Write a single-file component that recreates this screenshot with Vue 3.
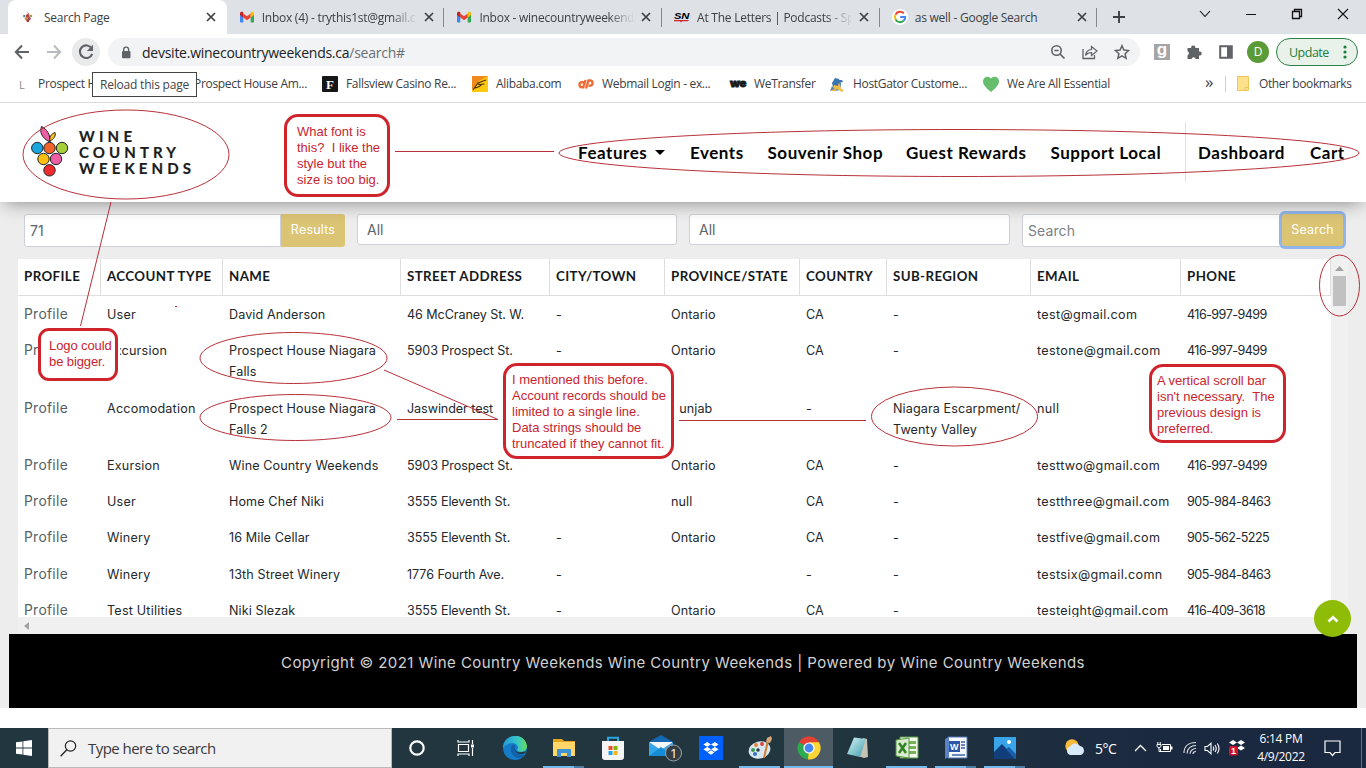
<script setup>
const tabs = [
  { icon: 'grape', title: 'Search Page', active: true },
  { icon: 'gmail', title: 'Inbox (4) - trythis1st@gmail.c' },
  { icon: 'gmail', title: 'Inbox - winecountryweekend' },
  { icon: 'sn', title: 'At The Letters | Podcasts - Sp' },
  { icon: 'google', title: 'as well - Google Search' },
]
const bookmarks = [
  { icon: 'l', text: 'Prospect H', w: 156 },
  { icon: 'none', text: 'Prospect House Am...', w: 152 },
  { icon: 'f', text: 'Fallsview Casino Re...', w: 150 },
  { icon: 'ali', text: 'Alibaba.com', w: 106 },
  { icon: 'cp', text: 'Webmail Login - ex...', w: 152 },
  { icon: 'we', text: 'WeTransfer', w: 99 },
  { icon: 'hg', text: 'HostGator Custome...', w: 154 },
  { icon: 'heart', text: 'We Are All Essential', w: 200 },
]
const nav = [
  { t: 'Features', w: 112, caret: true },
  { t: 'Events', w: 77.5 },
  { t: 'Souvenir Shop', w: 138.5 },
  { t: 'Guest Rewards', w: 144.5 },
  { t: 'Support Local', w: 134.5 },
]
const heads = ['PROFILE', 'ACCOUNT TYPE', 'NAME', 'STREET ADDRESS', 'CITY/TOWN', 'PROVINCE/STATE', 'COUNTRY', 'SUB-REGION', 'EMAIL', 'PHONE']
const rows = [
  ['User', 'David Anderson', '46 McCraney St. W.', '-', 'Ontario', 'CA', '-', 'test@gmail.com', '416-997-9499'],
  ['Excursion', 'Prospect House Niagara Falls', '5903 Prospect St.', '-', 'Ontario', 'CA', '-', 'testone@gmail.com', '416-997-9499'],
  ['Accomodation', 'Prospect House Niagara Falls 2', 'Jaswinder test', '', 'Punjab', '-', 'Niagara Escarpment/ Twenty Valley', 'null', ''],
  ['Exursion', 'Wine Country Weekends', '5903 Prospect St.', '', 'Ontario', 'CA', '-', 'testtwo@gmail.com', '416-997-9499'],
  ['User', 'Home Chef Niki', '3555 Eleventh St.', '', 'null', 'CA', '-', 'testthree@gmail.com', '905-984-8463'],
  ['Winery', '16 Mile Cellar', '3555 Eleventh St.', '-', 'Ontario', 'CA', '-', 'testfive@gmail.com', '905-562-5225'],
  ['Winery', '13th Street Winery', '1776 Fourth Ave.', '-', '', '-', '-', 'testsix@gmail.comn', '905-984-8463'],
  ['Test Utilities', 'Niki Slezak', '3555 Eleventh St.', '-', 'Ontario', 'CA', '-', 'testeight@gmail.com', '416-409-3618'],
]
</script>

<template>
  <div class="screen">
    <div class="strip">
      <div v-for="(t, i) in tabs" :key="i" class="tab" :class="{ active: t.active }">
        <svg v-if="t.icon === 'grape'" class="ic shift" viewBox="0 0 16 16"><path d="M7.500 2.500 9 5 8 6z" fill="#9c5a3c"/><circle cx="4.300" cy="7" r="1.300" fill="#5a8fa8"/><circle cx="7.800" cy="7" r="1.900" fill="#b5483a"/><circle cx="11" cy="7" r="1.300" fill="#a3a24a"/><circle cx="6.200" cy="9.500" r="1.500" fill="#c98a35"/><circle cx="9.300" cy="9.500" r="1.500" fill="#a8476f"/><circle cx="7.800" cy="11.500" r="1.500" fill="#a83232"/></svg>
        <svg v-else-if="t.icon === 'gmail'" class="ic" viewBox="0 0 16 16"><path d="M1 4v8.500c0 .6.400 1 1 1h2.300V6.500z" fill="#4285f4"/><path d="M15 4v8.500c0 .6-.4 1-1 1h-2.300V6.500z" fill="#34a853"/><path d="M4.300 4.500 8 7.300l3.700-2.800v4L8 11.300 4.300 8.500z" fill="#ea4335"/><path d="M1 4.500C1 2.800 2.600 2.400 3.700 3.100l.6.500v5L1 6z" fill="#c5221f"/><path d="M15 4.500c0-1.700-1.600-2.100-2.700-1.400l-.6.500v5L15 6z" fill="#fbbc04"/></svg>
        <svg v-else-if="t.icon === 'sn'" class="ic" viewBox="0 0 16 16"><text x="0" y="10" class="sn" textLength="15" lengthAdjust="spacingAndGlyphs">SN</text><path d="M0 11h15l-1 1.300H8l-1 1.300-1-1.300H0z" fill="#d5232f"/></svg>
        <svg v-else class="ic" viewBox="0 0 16 16"><circle cx="8" cy="8" r="8" fill="#fff"/><path d="M11.800 4.300A5.200 5.200 0 0 0 3.500 5.600" stroke="#ea4335" stroke-width="2" fill="none"/><path d="M3.500 5.600a5.200 5.200 0 0 0 0 4.900" stroke="#fbbc05" stroke-width="2" fill="none"/><path d="M3.500 10.500a5.200 5.200 0 0 0 8 1.300" stroke="#34a853" stroke-width="2" fill="none"/><path d="M11.500 11.800A5 5 0 0 0 13.200 8H8.200" stroke="#4285f4" stroke-width="2" fill="none"/></svg>
        <span class="tt" :class="{ fade: i > 0 && i < 4 }">{{ t.title }}</span>
        <svg class="x" viewBox="0 0 10 10"><path d="M1 1l8 8M9 1l-8 8" stroke="#3c4043" stroke-width="1.700"/></svg>
      </div>
      <svg class="plus" viewBox="0 0 12 12"><path d="M6 0v12M0 6h12" stroke="#3c4043" stroke-width="1.900"/></svg>
      <div class="winbtns">
        <svg viewBox="0 0 12 12"><path d="M1 3l5 5.500L11 3" fill="none" stroke="#111" stroke-width="1.100"/></svg>
        <svg viewBox="0 0 12 12"><path d="M1 6.500h10" stroke="#111"/></svg>
        <svg viewBox="0 0 12 12"><path d="M1.500 3.500h7v7h-7zM3.500 3.500v-2h7v7h-2" fill="none" stroke="#111" stroke-width="1.300"/></svg>
        <svg viewBox="0 0 12 12"><path d="M1 1l10 10M11 1L1 11" stroke="#111" stroke-width="1.100"/></svg>
      </div>
    </div>

    <div class="toolbar">
      <div class="tb"><svg width="16" height="16" viewBox="0 0 16 16"><path d="M15 8H2M8 1.500 1.800 8 8 14.500" fill="none" stroke="#5f6368" stroke-width="2"/></svg></div>
      <div class="tb"><svg width="16" height="16" viewBox="0 0 16 16"><path d="M1 8h13M8 1.500 14.200 8 8 14.500" fill="none" stroke="#b9bbbe" stroke-width="2"/></svg></div>
      <div class="tb rel"><svg width="16" height="16" viewBox="0 0 16 16"><path d="M13.700 4.500A6.300 6.300 0 1 0 14.200 9.800" fill="none" stroke="#5f6368" stroke-width="2.100"/><path d="M15 .8v6.200H8.800z" fill="#5f6368"/></svg></div>
      <div class="omni">
        <svg width="10" height="13" viewBox="0 0 10 13"><rect x="1" y="5" width="8.500" height="7.200" rx="1" fill="#5f6368"/><path d="M2.700 5.500V3.600a2.400 2.400 0 0 1 4.900 0v2" fill="none" stroke="#5f6368" stroke-width="1.400"/></svg>
        <span class="url">devsite.winecountryweekends.ca<i>/search#</i></span>
        <svg class="oi" viewBox="0 0 16 16"><circle cx="6.500" cy="6.500" r="4.700" fill="none" stroke="#5f6368" stroke-width="1.600"/><path d="M10 10l4.500 4.500M4.300 6.500h4.400" stroke="#5f6368" stroke-width="1.700"/></svg>
        <svg class="oi" viewBox="0 0 16 16"><path d="M1 5v9.500h11.500V11" fill="none" stroke="#5f6368" stroke-width="1.300"/><path d="M3.500 11.500C4 7.500 6.500 5.700 9.500 5.500V2.500L15 7l-5.500 4.500V8.500c-2.500 0-4.500.8-6 3z" fill="none" stroke="#5f6368" stroke-width="1.200"/></svg>
        <svg class="oi" viewBox="0 0 16 16"><path d="M8 1.700l1.900 4.300 4.700.5-3.500 3.200 1 4.600L8 11.900l-4.100 2.400 1-4.600L1.400 6.500 6.100 6z" fill="none" stroke="#5f6368" stroke-width="1.500"/></svg>
      </div>
      <div class="exts">
        <span class="g">g</span>
        <svg width="16" height="16" viewBox="0 0 16 16"><path d="M1.500 4h3.700a2.100 2.100 0 1 1 4.100 0H13v3.500a2.100 2.100 0 1 1 0 4V15H9.700a2.100 2.100 0 0 0-4.100 0H1.500v-3.700a2.100 2.100 0 0 0 0-4z" fill="#5f6368"/></svg>
        <svg width="16" height="16" viewBox="0 0 16 16"><path d="M2.200 2.200h11.600v11.600H2.200z" fill="none" stroke="#5f6368" stroke-width="2"/><path d="M9 2h5v12H9z" fill="#5f6368"/></svg>
      </div>
      <span class="ava">D</span>
      <span class="upd">Update<svg width="4" height="16" viewBox="0 0 4 16"><circle cx="2" cy="3" r="1.600"/><circle cx="2" cy="8" r="1.600"/><circle cx="2" cy="13" r="1.600"/></svg></span>
    </div>

    <div class="marks">
      <div v-for="b in bookmarks" :key="b.text" class="bm" :style="{ width: b.w + 'px' }">
        <svg v-if="b.icon !== 'none'" class="bi" viewBox="0 0 16 16">
          <text v-if="b.icon === 'l'" x="5" y="13" class="ltr">L</text>
          <g v-if="b.icon === 'f'"><rect width="16" height="16" rx="1" fill="#161616"/><text x="4" y="13" class="ff">F</text></g>
          <g v-if="b.icon === 'ali'"><path d="M0 0h16v16H0z" fill="#fdc90f"/><path d="M0 0h16L7 5 1 13H0z" fill="#f08a1c"/><path d="M1 14 6 7l8-3M6 8c2 1 5 .3 6.500 0M3 12c4-1 6-2 7-4" fill="none" stroke="#4b2f0c" stroke-width="1.100"/></g>
          <g v-if="b.icon === 'cp'" fill="none" stroke="#ef6c37" stroke-width="2.400"><path d="M6 6.300H4a2.500 2.500 0 0 0 0 5h1.300L7.500 4M8 12.500 10.500 4.500H12a2.600 2.600 0 0 1 0 5.200h-1.500"/></g>
          <text v-if="b.icon === 'we'" x="0" y="11" class="we" textLength="16" lengthAdjust="spacingAndGlyphs">we</text>
          <g v-if="b.icon === 'hg'"><path d="M3 7 6 2l4 1 2 5-1 6-6 1z" fill="#3b75af"/><path d="M2 15l3-6 4 1 1-4 2 7 3 1-2 2-5-3-2 2z" fill="#f3bd3f"/><path d="M1 15l2-5 3 3z" fill="#6689a5"/><path d="M8 4h5l1 2-5 1z" fill="#3b75af"/></g>
          <path v-if="b.icon === 'heart'" d="M8 16C4 12.500 0 9.500 0 5.300 0 .5 5.500-.8 8 2.500 10.500-.8 16 .5 16 5.300 16 9.500 12 12.500 8 16z" fill="#66bd6b"/>
        </svg>
        <span v-else class="bi"></span>
        <span class="bt">{{ b.text }}</span>
      </div>
      <span class="more">»</span><span class="msep"></span>
      <svg width="12" height="15" viewBox="0 0 12 15"><path d="M.5.500h11v14H.5z" fill="#fde28b" stroke="#efc65a"/><path d="M8 14.500v-3h3.500" fill="none" stroke="#efc65a"/></svg>
      <span class="other">Other bookmarks</span>
    </div>

    <header class="site">
      <svg class="logo" viewBox="0 0 164 56">
        <g stroke="#222" stroke-width="1">
          <path d="M20 18C11.500 14 9.500 8 11.500 2.500 17 5 20.500 11 20 18z" fill="#ec5fa5"/><path d="M20 17c-1-4 1-7 5-8.500C26 12 24 15 20 17z" fill="#fbc21b"/>
          <circle cx="7.300" cy="24" r="5.700" fill="#18a5e0"/><circle cx="19.500" cy="24" r="5.700" fill="#f0642a"/><circle cx="32" cy="24" r="5.700" fill="#a6ce39"/>
          <circle cx="13.500" cy="35" r="5.700" fill="#fdbf10"/><circle cx="26" cy="35" r="5.700" fill="#ec5fa5"/><circle cx="19.500" cy="46.300" r="5.700" fill="#ee2a2c"/>
        </g>
        <g class="brand"><text x="49" y="18" textLength="53">WINE</text><text x="49" y="34" textLength="97">COUNTRY</text><text x="49" y="50" textLength="112">WEEKENDS</text></g>
      </svg>
      <nav>
        <a v-for="n in nav" :key="n.t" :style="{ width: n.w + 'px' }">{{ n.t }}<b v-if="n.caret" class="caret"></b></a>
        <a class="dash"><span>Dashboard</span></a>
        <a>Cart</a>
      </nav>
    </header>

    <main>
      <div class="filters">
        <div class="grp"><span class="box">71</span><span class="btn">Results</span></div>
        <div class="sel">All</div>
        <div class="sel">All</div>
        <div class="grp"><span class="box ph">Search</span><span class="btn focus">Search</span></div>
      </div>
      <div class="tablewrap">
        <div class="table">
          <div class="tr th"><span v-for="h in heads" :key="h">{{ h }}</span></div>
          <div v-for="(r, i) in rows" :key="i" class="tr td"><a>Profile</a><span v-for="(c, j) in r" :key="j" :class="'c' + j">{{ c }}</span></div>
        </div>
        <div class="vbar"><svg width="9" height="5" viewBox="0 0 9 5"><path d="M0 5 4.500 0 9 5z" fill="#a3a3a3"/></svg><i></i></div>
      </div>
      <div class="hbar"><svg width="5" height="8" viewBox="0 0 5 8"><path d="M5 0v8L0 4z" fill="#a3a3a3"/></svg></div>
      <footer>Copyright © 2021 Wine Country Weekends Wine Country Weekends | Powered by Wine Country Weekends</footer>
    </main>
    <div class="blank"></div>

    <div class="taskbar">
      <div class="start"><svg width="16" height="16" viewBox="0 0 16 16"><path d="M0 2.300 6.500 1.400v6.200H0zM7.300 1.300 16 0v7.600H7.300zM0 8.400h6.500v6.200L0 13.700zM7.300 8.400H16V16l-8.700-1.300z" fill="#fff"/></svg></div>
      <div class="find"><svg width="17" height="17" viewBox="0 0 17 17"><circle cx="10.500" cy="6" r="5.200" fill="none" stroke="#222" stroke-width="1.200"/><path d="M6.800 9.800.6 16.200" stroke="#222" stroke-width="1.300"/></svg><span>Type here to search</span></div>
      <div class="apps">
        <div class="app"><svg width="18" height="18" viewBox="0 0 18 18"><circle cx="9" cy="9" r="6.700" fill="none" stroke="#fff" stroke-width="2.200"/></svg></div>
        <div class="app"><svg width="18" height="18" viewBox="0 0 18 18"><path d="M1.500 5.500h10v7h-10zM1 1v2h11V1M1 17v-2h11v2M15.500 1v4M15.500 9v8" fill="none" stroke="#fff" stroke-width="1.200"/><path d="M14 5.500h3v3h-3z" fill="#fff"/></svg></div>
        <div class="app"><svg width="24" height="24" viewBox="0 0 24 24"><defs><linearGradient id="e1"><stop stop-color="#249bd8"/><stop offset=".6" stop-color="#35c5c9"/><stop offset="1" stop-color="#68dc59"/></linearGradient></defs><circle cx="12" cy="12" r="12" fill="#147cc9"/><path d="M0 10C2-3 22-4 24 10c0 6-7 7-9 5-2-1 0-2 0-4C13 5 4 6 0 12z" fill="url(#e1)"/><path d="M9 9c-3 5 0 12 6 13 4 0 6-2 8-4-6 3-12-1-11-6 0-2 0-4-3-3z" fill="#1262a9"/><path d="M12 11c-1 4 3 6 7 5l4-.5c-1 2-2 2-3 2.500-6 1-9-3-8-7z" fill="#21363f"/></svg></div>
        <div class="app run two"><svg width="22" height="20" viewBox="0 0 22 20"><path d="M0 1h9l2 2h11v15H0z" fill="#e5a51c"/><path d="M0 4h22v14H0z" fill="#ffd667"/><path d="M4 11h14v8h-4v-4H8v4H4z" fill="#3e93d5"/></svg></div>
        <div class="app"><svg width="24" height="24" viewBox="0 0 24 24"><path d="M7 6V1.800h10V6" fill="none" stroke="#2ba7e0" stroke-width="2"/><path d="M1 5h22v16q0 3-3 3H4q-3 0-3-3z" fill="#f5f5f5"/><path d="M7.500 10h4v4h-4z" fill="#e8502d"/><path d="M12.500 10h4v4h-4z" fill="#7db700"/><path d="M7.500 15h4v4h-4z" fill="#22a3e8"/><path d="M12.500 15h4v4h-4z" fill="#f9b511"/></svg></div>
        <div class="app mail"><svg width="34" height="28" viewBox="0 0 34 28"><path d="M1 8 13 1l12 7v14H1z" fill="#1569b4"/><path d="M2 8h22v9H2z" fill="#f5f7f9"/><path d="m1 8 12 8 12-8v14H1z" fill="#35a7e8"/><path d="m1 22 12-9 12 9z" fill="#168bd6"/><circle cx="25.500" cy="19" r="8" fill="#333d43" stroke="#9aa4a9"/><text x="22" y="23.500" class="num">1</text></svg></div>
        <div class="app"><svg width="24" height="24" viewBox="0 0 24 24"><path d="M0 0h24v24H0z" fill="#0061fe"/><path d="m8.200 6 3.800 2.400-3.800 2.400-3.800-2.400zM15.800 6l3.800 2.400-3.800 2.400L12 8.400zM8.200 10.900l3.800 2.400-3.800 2.400-3.800-2.400zM15.800 10.900l3.800 2.400-3.800 2.400-3.800-2.400zM12 14.300l3.500 2.200L12 18.800l-3.500-2.300z" fill="#fff"/></svg></div>
        <div class="app run"><svg width="24" height="24" viewBox="0 0 24 24"><ellipse cx="11.500" cy="14" rx="11" ry="8.500" transform="rotate(-14 11.500 14)" fill="#d8e6ef"/><circle cx="5" cy="14" r="2" fill="#3a9b4d"/><circle cx="8" cy="9" r="1.900" fill="#e77d31"/><circle cx="14" cy="8" r="1.900" fill="#d93d36"/><circle cx="10" cy="14" r="1.700" fill="#21363f"/><circle cx="7" cy="18" r="2" fill="#3674bd"/><path d="M15 22 19 4l2 1-4 17z" fill="#cf8034"/><path d="m18 6 1-4 4-2 1 3-2 4z" fill="#d7a77a"/></svg></div>
        <div class="app run cur"><svg width="24" height="24" viewBox="0 0 24 24"><path d="M12 12 2 6.200A11.500 11.500 0 0 1 22 6.200z" fill="#e34133"/><path d="M12 12 2 6.200A11.500 11.500 0 0 0 11 23.500L16.500 14.500z" fill="#2da94f"/><path d="M12 12 11 23.500A11.500 11.500 0 0 0 22 6.200H12z" fill="#fdd633"/><circle cx="12" cy="12" r="5.600" fill="#fff"/><circle cx="12" cy="12" r="4.400" fill="#4586f1"/></svg></div>
        <div class="app"><svg width="24" height="24" viewBox="0 0 24 24"><defs><linearGradient id="n1" x2="1" y2="1"><stop stop-color="#d8f4f5"/><stop offset="1" stop-color="#3e9dae"/></linearGradient></defs><path d="M17 2l4 1 1 18-4 1-6-2z" fill="#c9c3b4"/><path d="M8 1.500 20 3l-6 18-13-3z" fill="url(#n1)"/></svg></div>
        <div class="app run"><svg width="24" height="24" viewBox="0 0 24 24"><path d="M5 1h18v21H5z" fill="#f3f8ef" stroke="#5b9b45"/><path d="M14 5h7v3h-7zM14 10h7v3h-7zM14 15h7v3h-7z" fill="#77b255"/><path d="M1 4 14 2v20L1 20z" fill="#dcecd2" stroke="#4f943b"/><path d="m4 7 7 10M11 7 4 17" stroke="#348427" stroke-width="2.600"/></svg></div>
        <div class="app run two"><svg width="24" height="24" viewBox="0 0 24 24"><path d="M4 1h19v21H4z" fill="#f6f9ff" stroke="#5074b7"/><path d="M17 6h4M17 9h4M17 12h4M8 19h13" stroke="#3860ae" stroke-width="1.500"/><path d="m1 3 4-2v20l-4 2z" fill="#5c82c5"/><path d="M5 5h11v11H5z" fill="#2c57a8"/><text x="6" y="14" class="w">W</text></svg></div>
        <div class="app run two"><svg width="22" height="22" viewBox="0 0 22 22"><path d="M0 0h22v22H0z" fill="#3aa4ea"/><path d="m0 15 8-8 14 15H0z" fill="#123e7b"/><path d="m12 12 3-2 7 7v5h-1z" fill="#1961ad"/><circle cx="15" cy="5" r="2" fill="#fff"/></svg></div>
      </div>
      <div class="tray">
        <svg width="22" height="18" viewBox="0 0 22 18"><circle cx="8" cy="7" r="6.700" fill="#f9b93a"/><path d="M6 16a4.500 4.500 0 0 1 0-8.500A6 6 0 0 1 16 7a4.700 4.700 0 0 1 1 9z" fill="#d8e9f8"/></svg>
        <span class="deg">5°C</span>
        <svg class="up" width="13" height="8" viewBox="0 0 13 8"><path d="m1 7 5.500-5.500L12 7" fill="none" stroke="#fff" stroke-width="1.300"/></svg>
        <svg class="bat" width="17" height="14" viewBox="0 0 17 14"><path d="M6 3.500h8.500v7h-10V8" fill="none" stroke="#fff"/><path d="M7 5h6v4H7zM15 5.500h1.500v3H15z" fill="#fff"/><path d="M1 3.500h4v2L3 7 1 5.500zM1.800 1v2M4.200 1v2M3 7v3.500h2" fill="none" stroke="#fff"/></svg>
        <svg class="wifi" width="14" height="14" viewBox="0 0 14 14"><g fill="none" stroke="#dfe3e8" stroke-width="1.100"><path d="M1 12C1 5 6 1.500 13 1.500M4 12.500c0-5 4-8 9-8M7 12.700c0-3 3-5.200 6-5.200M10 13c0-1.500 1.500-2.500 3-2.500"/></g></svg>
        <svg class="vol" width="17" height="13" viewBox="0 0 17 13"><path d="M1 4.500h2.500L7 1.200v10.600L3.500 8.500H1zM9 4.500q1.500 2 0 4M11 3q2.500 3.500 0 7M13.300 1.500q3.400 5 0 10" fill="none" stroke="#fff" stroke-width="1.100"/></svg>
        <svg class="db" width="18" height="16" viewBox="0 0 18 16"><path d="m5 0 4 2.500L5 5 1 2.500zM13 0l4 2.500L13 5 9 2.500zM13 5.500 17 8l-4 2.500L9 8z" fill="#fff"/><rect x="1" y="6" width="9" height="9.500" rx="2" fill="#d0112b"/><text x="3" y="14" class="w">1</text></svg>
        <div class="clock"><span>6:14 PM</span><span>4/9/2022</span></div>
        <svg class="act" width="17" height="17" viewBox="0 0 17 17"><path d="M1 1h15v11.500h-5L8.500 15.500 6 12.500H1z" fill="none" stroke="#fff" stroke-width="1.200"/></svg>
        <span class="peek"></span>
      </div>
    </div>

    <div class="tooltip">Reload this page</div>
    <div class="totop"><svg width="12" height="8" viewBox="0 0 12 8"><path d="M1.500 6.500 6 2.200l4.500 4.300" fill="none" stroke="#fff" stroke-width="2.600"/></svg></div>
    <svg class="ink" viewBox="0 0 1366 768">
      <ellipse cx="126" cy="154.500" rx="103" ry="44.500"/>
      <ellipse cx="959" cy="153" rx="400" ry="23.500"/>
      <ellipse cx="293.500" cy="358" rx="93.500" ry="25.500"/>
      <ellipse cx="295.500" cy="417.500" rx="95.500" ry="23"/>
      <ellipse cx="954.500" cy="416.500" rx="83" ry="29.500"/>
      <ellipse cx="1339.500" cy="285.500" rx="20" ry="30.500"/>
      <path d="M111 202 80.500 326M395 151.500h159M384 370l114 49.500M397 419.500h101M678 420.500h188M175 306.500h2"/>
    </svg>
    <div class="note n1">What font is<br>this?&nbsp; I like the<br>style but the<br>size is too big.</div>
    <div class="note n2">Logo could<br>be bigger.</div>
    <div class="note n3">I mentioned this before.<br>Account records should be<br>limited to a single line.<br>Data strings should be<br>truncated if they cannot fit.</div>
    <div class="note n4">A vertical scroll bar<br>isn't necessary.&nbsp; The<br>previous design is<br>preferred.</div>
  </div>
</template>

<style>
body { margin: 0; overflow: hidden; }
</style>
<style scoped>
* { box-sizing: border-box; }
.screen { position: relative; width: 1366px; height: 768px; overflow: hidden; background: #fff; display: flex; flex-direction: column; font-family: "Open Sans", sans-serif; color: #3c4043; }
svg { display: block; flex: none; }
.strip { height: 34px; background: #dee1e6; display: flex; padding-left: 8px; flex: none; }
.tab { position: relative; width: 217.700px; height: 34px; display: flex; align-items: center; padding-left: 13px; font-size: 12px; letter-spacing: -.25px; flex: none; }
.tab.active { background: #fff; border-radius: 8px 8px 0 0; width: 219px; margin-right: -1.300px; padding-left: 14px; }
.tab:not(.active)::after { content: ""; position: absolute; right: -1px; top: 8px; height: 19px; width: 1px; background: #85888d; }
.ic { width: 16px; height: 16px; margin-right: 7px; }
.shift { margin: 0 8px 0 -2px; }
.sn { font: italic 900 9.500px "Liberation Sans", sans-serif; }
.tt { width: 154px; white-space: nowrap; }
.fade { -webkit-mask-image: linear-gradient(90deg, #000 84%, #0002 98%); mask-image: linear-gradient(90deg, #000 84%, #0002 98%); }
.x { width: 10px; height: 10px; margin-left: 8px; }
.plus { width: 12px; height: 12px; margin: 11px 0 0 17px; }
.winbtns { margin: 8px 17px 0 auto; display: flex; gap: 34px; }
.winbtns svg { width: 12px; height: 12px; }
.toolbar { height: 35px; display: flex; align-items: center; padding: 1px 8px 0; flex: none; }
.tb { width: 28px; height: 28px; border-radius: 50%; display: grid; place-items: center; margin-right: 4px; }
.rel { background: #e9eaec; }
.omni { width: 1032px; margin-left: 4px; height: 28px; background: #f1f3f4; border-radius: 14px; display: flex; align-items: center; padding: 0 10px 0 13px; }
.url { font-size: 14px; letter-spacing: -.5px; margin-left: 11px; flex: 1; color: #202124; }
.url i { font-style: normal; color: #6b6f74; }
.oi { width: 16px; height: 16px; margin-left: 16px; }
.exts { display: flex; gap: 16px; margin-left: 14px; }
.g { width: 16px; height: 16px; background: #a5a5a5; color: #fff; font: bold 17px/12px "Liberation Sans", sans-serif; text-align: center; }
.ava { width: 22px; height: 22px; border-radius: 50%; background: #5b9b37; color: #fff; font-size: 12px; line-height: 22px; text-align: center; margin: 0 7px 0 13px; }
.upd { width: 82px; height: 28px; border: 1px solid #2b8045; border-radius: 14px; background: #e8f1ea; color: #1e7e3c; font-size: 12.500px; letter-spacing: -.5px; display: flex; align-items: center; padding-left: 12px; gap: 14px; flex: none; }
.url, .upd { white-space: nowrap; }
.url { letter-spacing: -.25px; }
.upd svg { fill: #1e7e3c; }
.marks { height: 34px; display: flex; align-items: center; padding: 0 0 4px 14px; border-bottom: 1px solid #d9dadc; font-size: 12px; letter-spacing: -.32px; flex: none; }
.bm { display: flex; align-items: center; white-space: nowrap; flex: none; }
.bi { width: 16px; height: 16px; margin-right: 8px; flex: none; overflow: visible; }
.ltr { font: 11px "Open Sans", sans-serif; fill: #888; }
.ff { font: bold 13px "Liberation Serif", serif; fill: #fff; }
.we { font: 900 10.500px Inter, sans-serif; fill: #17181a; stroke: #17181a; stroke-width: .8; }
.more { font-size: 17px; width: 21px; margin: -4px 0 0 22px; }
.msep { width: 1px; height: 16px; background: #cfd1d4; margin: 0 11px 0 -1px; }
.other { margin-left: 10px; letter-spacing: -.4px; white-space: nowrap; }
.site { position: relative; z-index: 1; height: 99px; background: #fff; box-shadow: 0 5px 18px -5px #0007; display: flex; flex: none; padding: 21px 0 0 30px; clip-path: inset(0 0 -40px 0); }
.logo { width: 164px; height: 56px; }
.brand { font: 700 15px Lato, sans-serif; fill: #1c1c1c; stroke: #1c1c1c; stroke-width: .2; }
nav { display: flex; margin: -3px 0 0 384px; height: 62px; align-items: center; font: 700 17px Lato, sans-serif; letter-spacing: .53px; color: #050505; white-space: nowrap; }
nav a { flex: none; }
.caret { display: inline-block; border: 5px solid transparent; border-top-color: #000; border-bottom: 0; margin: 0 0 4px 8px; }
.dash { border-left: 1px solid #e0e0e0; height: 60px; display: flex; align-items: center; padding-left: 12px; width: 125px; }
main { height: 506px; background: #ededed; display: flex; flex-direction: column; flex: none; font-family: Inter, sans-serif; }
.filters { display: grid; grid-template-columns: 321px 320px 321px 321px; gap: 12px; padding: 12px 0 0 24px; height: 57px; font-size: 14px; color: #5b656b; align-items: start; }
.grp { display: flex; height: 33px; }
.box, .sel { background: #fff; border: 1px solid #cdd1d5; border-radius: 3px; line-height: 31px; padding-left: 5px; }
.box { flex: 1; border-radius: 3px 0 0 3px; }
.ph { color: #7b8185; letter-spacing: .1px; }
.sel { height: 31px; line-height: 30px; padding-left: 9px; }
.btn { width: 64px; background: #dbc474; color: #fff; border-radius: 0 3px 3px 0; text-align: center; line-height: 31px; font-size: 12.500px; letter-spacing: .2px; }
.focus { border-radius: 3px; box-shadow: 0 0 0 3px #91b5ea; width: 61px; height: 32px; }
.tablewrap { display: flex; height: 358px; margin-left: 18px; overflow: hidden; }
.table { width: 1313px; background: #fff; flex: none; }
.tr { display: grid; grid-template-columns: 83px 122px 178px 149px 115px 135px 87px 144px 150px 150px; }
.th { height: 37px; border-bottom: 1px solid #dedede; font: 700 13.300px/34px Lato, sans-serif; letter-spacing: .4px; color: #16191c; }
.th span { border-right: 1px solid #dedede; padding-left: 6px; white-space: nowrap; }
.td { font-size: 12.600px; line-height: 21.200px; letter-spacing: .1px; color: #23282c; min-height: 36.200px; }
.td > * { padding: 8px 0 7px 6px; }
.td > a { font-size: 13.800px; color: #565f64; letter-spacing: .3px; }
.td > .c1, .td > .c6 { padding-right: 6px; }
.td > .c2 { letter-spacing: -.08px; }
.td > .c7 { white-space: nowrap; letter-spacing: .34px; }
.td > .c8 { letter-spacing: -.56px; }
.td > .c0 { letter-spacing: .2px; }
.vbar { width: 17px; background: #f0f0f0; display: flex; flex-direction: column; align-items: center; padding-top: 7px; }
.vbar i { width: 13px; height: 30px; background: #c1c1c1; margin-top: 5px; }
.hbar { height: 17px; margin: 0 18px; background: #f0f0f0; padding: 5px 0 0 6px; flex: none; }
footer { height: 74px; margin: 0 9px; background: #000; color: #d2d2d2; text-align: center; font-size: 15px; line-height: 57px; letter-spacing: .44px; white-space: nowrap; }
.blank { height: 20px; flex: none; }
.taskbar { height: 40px; display: flex; background: linear-gradient(90deg, #21363f 0 60%, #1b2940 85%); color: #fff; flex: none; }
.start { width: 48px; display: grid; place-items: center; }
.find { width: 344px; background: #f1f1f1; border: 1px solid #b9b9b9; display: flex; align-items: center; gap: 11px; padding-left: 11px; color: #3a3a3a; font-size: 15px; letter-spacing: -.55px; }
.apps { display: flex; }
.app { width: 49px; height: 40px; display: grid; place-items: center; position: relative; }
.mail { padding-left: 7px; }
.run::after { content: ""; position: absolute; bottom: 0; left: 4px; right: 4px; height: 2px; background: #76b9ed; }
.two::after { background: linear-gradient(90deg, #76b9ed 76%, #4b7da5 76%); }
.cur { background: #4d5b64; }
.cur::after { left: 0; right: 0; }
.num { font: 13px "Open Sans", sans-serif; fill: #fff; }
.w { font: bold 9px "Liberation Sans", sans-serif; fill: #fff; }
.tray { margin-left: auto; display: flex; align-items: center; font-size: 12px; letter-spacing: -.3px; }
.deg { font-size: 14px; letter-spacing: -.5px; margin-left: 9px; width: 39px; }
.bat { margin-left: 9px; } .wifi { margin-left: 10px; } .vol { margin-left: 7px; } .db { margin-left: 7px; }
.clock { width: 60px; margin-left: 5px; text-align: center; display: flex; flex-direction: column; line-height: 18px; }
.act { margin-left: 13px; }
.peek { border-left: 1px solid #66707f; height: 40px; margin-left: 20px; width: 5px; }
.tooltip { position: absolute; left: 92px; top: 72px; width: 105px; height: 25px; background: #fff; border: 1px solid #444; font-size: 12px; letter-spacing: -.2px; line-height: 23px; text-align: center; white-space: nowrap; color: #444; }
.totop { position: absolute; left: 1314px; top: 600px; width: 37px; height: 37px; border-radius: 50%; background: #8fbc06; display: grid; place-items: center; z-index: 3; }
.ink { position: absolute; inset: 0; width: 1366px; height: 768px; fill: none; stroke: #b8303a; stroke-width: 1; z-index: 4; }
.note { position: absolute; z-index: 5; background: #fff; border: 3px solid #d0242c; border-radius: 14px; color: #c9252f; font: 13px/16px "Liberation Sans", sans-serif; white-space: nowrap; }
.n1 { left: 284px; top: 114px; width: 106px; height: 83px; padding: 7px 0 0 10px; }
.n2 { left: 38px; top: 328px; width: 80px; height: 53px; padding: 7px 0 0 8px; border-radius: 11px; box-shadow: 2px 0 #fff; letter-spacing: -.1px; }
.n3 { left: 503px; top: 363px; width: 171px; height: 96px; padding: 6px 0 0 6px; box-shadow: 5px 0 #fff; }
.n4 { left: 1149px; top: 364px; width: 137px; height: 79px; padding: 6px 0 0 5px; }
</style>
